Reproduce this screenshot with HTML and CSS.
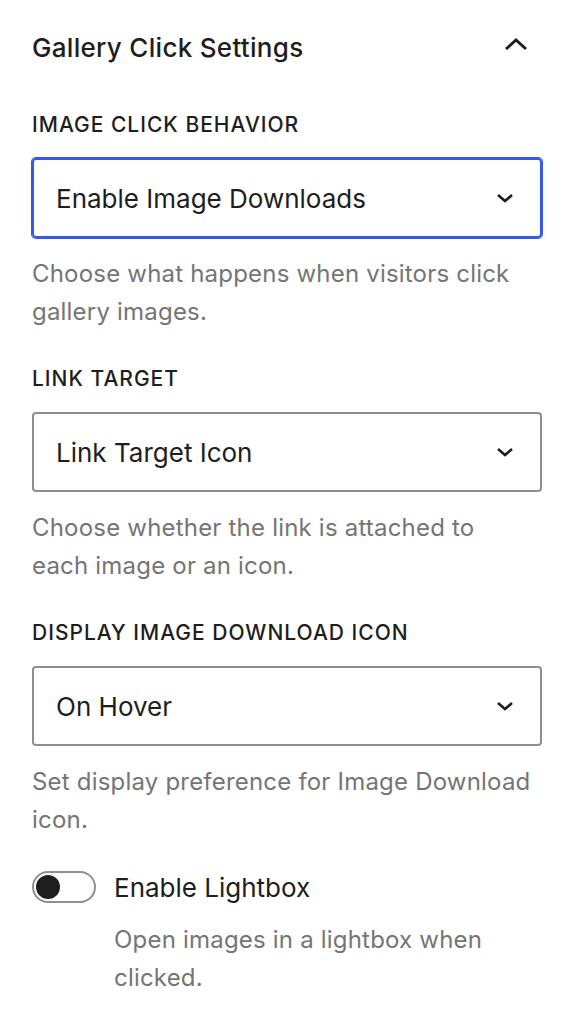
FILE: index.html
```html
<!DOCTYPE html>
<html lang="en">
<head>
  <meta charset="UTF-8" />
  <meta name="viewport" content="width=device-width, initial-scale=1.0"/>
  <title>Gallery Click Settings</title>
  <link rel="stylesheet" href="styles.css">
</head>
<body>
  <div class="panel">
    <div class="panel-header">
      <h2>Gallery Click Settings</h2>
      <svg class="caret" width="24" height="14" viewBox="0 0 24 14">
        <path d="M2 12 L12 3 L22 12" fill="none" stroke="#1e1e1e" stroke-width="3"/>
      </svg>
    </div>

    <div class="field first">
      <div class="label">Image Click Behavior</div>
      <div class="select focused">
        <span>Enable Image Downloads</span>
        <svg class="chev" width="18" height="10" viewBox="0 0 18 10">
          <path d="M2 2 L9 8 L16 2" fill="none" stroke="#1e1e1e" stroke-width="2.6"/>
        </svg>
      </div>
      <p class="help">Choose what happens when visitors click gallery images.</p>
    </div>

    <div class="field">
      <div class="label">Link Target</div>
      <div class="select">
        <span>Link Target Icon</span>
        <svg class="chev" width="18" height="10" viewBox="0 0 18 10">
          <path d="M2 2 L9 8 L16 2" fill="none" stroke="#1e1e1e" stroke-width="2.6"/>
        </svg>
      </div>
      <p class="help">Choose whether the link is attached to each image or an icon.</p>
    </div>

    <div class="field">
      <div class="label">Display Image Download Icon</div>
      <div class="select">
        <span>On Hover</span>
        <svg class="chev" width="18" height="10" viewBox="0 0 18 10">
          <path d="M2 2 L9 8 L16 2" fill="none" stroke="#1e1e1e" stroke-width="2.6"/>
        </svg>
      </div>
      <p class="help">Set display preference for Image Download icon.</p>
    </div>

    <div class="toggle-field">
      <div class="toggle-row">
        <span class="toggle"><span class="knob"></span></span>
        <span class="toggle-label">Enable Lightbox</span>
      </div>
      <p class="help indent">Open images in a lightbox when clicked.</p>
    </div>
  </div>
</body>
</html>
```

FILE: styles.css
```css
body {
  margin: 0;
  background: #fff;
  color: #1e1e1e;
  font-family: Inter, "Noto Sans", sans-serif;
}

.panel {
  padding: 27px 33px 0 32px;
}

.panel-header {
  display: flex;
  align-items: center;
  justify-content: space-between;
  height: 40px;
}

.panel-header h2 {
  margin: 0;
  font-size: 26px;
  font-weight: 500;
  letter-spacing: 0.3px;
}

.caret {
  margin-right: 14px;
  margin-top: -6px;
}

.field {
  margin-top: 32px;
}

.field.first {
  margin-top: 42px;
}

.label {
  text-transform: uppercase;
  font-size: 21px;
  font-weight: 500;
  letter-spacing: 1px;
  line-height: 32px;
  margin-bottom: 17px;
}

.select {
  box-sizing: border-box;
  height: 80px;
  border: 2px solid #8f8f8f;
  border-radius: 4px;
  display: flex;
  align-items: center;
  justify-content: space-between;
  padding: 0 26px 0 22px;
  font-size: 26px;
}

.select.focused {
  border-color: #3858e9;
  box-shadow: 0 0 0 1px #3858e9;
}

.help {
  margin: 17px 8px 0 0;
  font-size: 24px;
  letter-spacing: 0.2px;
  line-height: 38px;
  color: #757575;
}

.toggle-field {
  margin-top: 28px;
}

.toggle-row {
  display: flex;
  align-items: center;
  height: 40px;
}

.toggle {
  box-sizing: border-box;
  width: 64px;
  height: 32px;
  border: 2px solid #8f8f8f;
  border-radius: 16px;
  display: flex;
  align-items: center;
  padding-left: 2px;
  margin-right: 18px;
}

.knob {
  width: 24px;
  height: 24px;
  border-radius: 50%;
  background: #1e1e1e;
}

.toggle-label {
  font-size: 26px;
}

.help.indent {
  margin: 14px 0 0 82px;
}
```
